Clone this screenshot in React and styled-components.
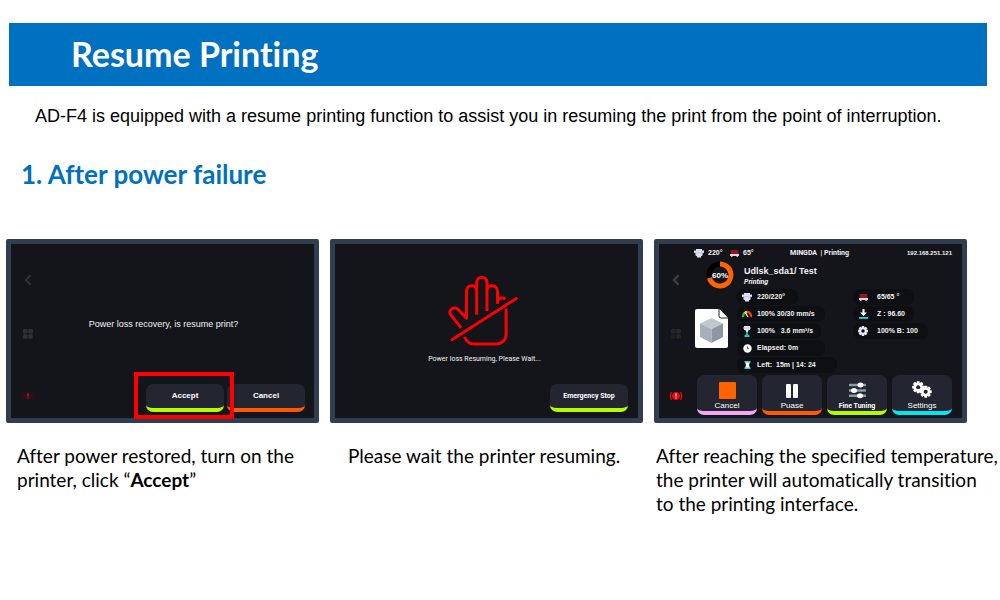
import React from "react";
import styled, { createGlobalStyle } from "styled-components";

const GlobalStyle = createGlobalStyle`
  * { box-sizing: border-box; }
  body { margin: 0; background: #fff; color: #000; font-family: "Liberation Sans", Arial, sans-serif; font-variant-ligatures: none; }
  h1, h2, h3, p, ul, figure { margin: 0; padding: 0; }
  button { font-family: inherit; padding: 0; cursor: pointer; }
  svg { display: block; flex: none; }
`;

const Page = styled.main`
  padding: 23px 0 24px;
`;

const Banner = styled.header`
  display: flex;
  align-items: center;
  height: 63px;
  margin: 0 13px 0 9px;
  padding: 0 62px 2px;
  background: #0070c0;
`;

const Title = styled.h1`
  font-family: Lato, sans-serif;
  font-size: 34px;
  font-weight: 700;
  line-height: 40px;
  color: #fff;
`;

const Intro = styled.p`
  padding: 20px 36px 0 35px;
  font-size: 18px;
  line-height: 20px;
`;

const SectionTitle = styled.h2`
  padding: 32px 21px 0;
  font-family: Lato, sans-serif;
  font-size: 26px;
  font-weight: 700;
  line-height: 32px;
  color: #0070c0;
`;

const Steps = styled.div`
  display: grid;
  grid-template-columns: repeat(3, minmax(0, 1fr));
  gap: 11px;
  padding: 49px 33px 0 6px;
`;

const Step = styled.figure`
  display: flex;
  flex-direction: column;
  gap: 21px;
`;

const Caption = styled.figcaption`
  padding-left: ${(p) => p.$indent}px;
  font-family: Lato, sans-serif;
  font-size: 19px;
  line-height: 24px;
  white-space: nowrap;
`;

const Screen = styled.div`
  display: flex;
  height: 184px;
  border: 5px solid #323e4f;
  border-radius: 2px;
  background: #14151a;
  color: #f2f2f4;
`;

const Side = styled.nav`
  display: flex;
  flex-direction: column;
  align-items: center;
  gap: 40px;
  width: 35px;
  padding: 29px 2px 15px 0;
`;

const SideButton = styled.button`
  display: grid;
  place-items: center;
  width: 16px;
  height: 14px;
  border: 0;
  background: none;
  color: ${(p) => p.$color};

  &:last-child {
    margin-top: auto;
  }
`;

const DialogBody = styled.div`
  flex: 1;
  display: flex;
  flex-direction: column;
  justify-content: flex-end;
  padding: 0 9px 6px 0;
`;

const Message = styled.p`
  margin: auto 24px auto 0;
  padding-top: 20px;
  text-align: center;
  font-size: 9px;
  line-height: 12px;
`;

const WaitBody = styled(DialogBody)`
  align-items: stretch;
  padding: 31px 10px 6px 0;
`;

const WaitNotice = styled.div`
  flex: 1;
  display: flex;
  flex-direction: column;
  align-items: center;
  gap: 7px;
  padding-left: 6px;
`;

const HandFrame = styled.div`
  padding-right: 4px;
`;

const WaitText = styled.p`
  font-family: Roboto, sans-serif;
  font-size: 7px;
  line-height: 10px;
`;

const Actions = styled.div`
  display: flex;
  align-self: flex-end;
  gap: 3px;
`;

const Highlight = styled.div`
  position: relative;
  &::after {
    content: "";
    position: absolute;
    inset: -12px -10px -7px -12px;
    border: 4px solid #f00;
    pointer-events: none;
    z-index: 1;
  }
`;

const PanelButton = styled.button`
  display: block;
  width: 78px;
  height: 28px;
  border: 0;
  border-bottom: 4px solid ${(p) => p.$accent};
  border-radius: 7px;
  background: #232530;
  background-clip: padding-box;
  color: #fff;
  font: 700 ${(p) => p.$size || 8}px/10px ${(p) => p.$family || '"Liberation Sans"'}, sans-serif;
`;

const Dashboard = styled.div`
  flex: 1;
  display: flex;
  flex-direction: column;
  padding: 3px 10px 3px 0;
  min-width: 0;
`;

const StatusBar = styled.div`
  display: flex;
  align-items: center;
  gap: 4px;
  height: 12px;
  font-size: 7px;
  font-weight: 700;
  line-height: 10px;
  white-space: nowrap;
`;

const Temp = styled.span`
  display: flex;
  align-items: center;
  gap: 4px;
  width: 32px;
`;

const Brand = styled.span`
  flex: 1;
  padding-left: 24px;
  font-size: 7px;
  font-family: Roboto, sans-serif;
  white-space: pre;
`;

const Address = styled.span`
  font-size: 6px;
`;

const Job = styled.div`
  display: flex;
  align-items: center;
  gap: 10px;
  height: 28px;
  margin: 2px 0 0 12px;
`;

const JobName = styled.h3`
  padding-top: 2px;
  font-size: 9px;
  font-weight: 700;
  line-height: 11px;
`;

const JobState = styled.p`
  font-size: 7px;
  font-style: italic;
  font-weight: 700;
  line-height: 10px;
  font-family: Roboto, sans-serif;
`;

const Details = styled.div`
  display: flex;
  align-items: flex-start;
  height: 86px;
`;

const Preview = styled.div`
  width: 43px;
  padding: 20px 0 0 1px;
`;

const StatList = styled.ul`
  width: ${(p) => p.$width}px;
  display: flex;
  flex-direction: column;
  align-items: flex-start;
  gap: 1px;
  list-style: none;
`;

const Stat = styled.li`
  display: flex;
  align-items: center;
  gap: ${(p) => p.$gap}px;
  height: 16px;
  padding: 0 5px;
  border-radius: 7px;
  background: #0e0f12;
  font-size: 7px;
  font-weight: 700;
  line-height: 10px;
  white-space: pre;
`;

const Tiles = styled.div`
  display: grid;
  grid-template-columns: repeat(4, 1fr);
  gap: 5px;
  padding-left: 3px;
`;

const Tile = styled.button`
  display: flex;
  flex-direction: column;
  align-items: center;
  justify-content: flex-end;
  gap: 2px;
  height: 40px;
  border: 0;
  border-bottom: 4px solid ${(p) => p.$accent};
  border-radius: 7px;
  background: #232530;
  background-clip: padding-box;
  color: #fff;
  font: ${(p) => (p.$bold ? "700 7px/10px Roboto" : "400 8px/10px 'Liberation Sans'")}, sans-serif;
`;

const Chevron = () => (
  <svg width="8" height="12" viewBox="0 0 8 12" fill="none" stroke="currentColor" strokeWidth="2.4">
    <path d="M6.500 1.200 2 6l4.500 4.800" />
  </svg>
);

const GridIcon = ({ colors }) => (
  <svg width="10" height="10" viewBox="0 0 10 10">
    {colors.map((c, i) => (
      <rect key={i} x={(i % 2) * 5.3} y={Math.floor(i / 2) * 5.3} width="4.500" height="4.500" rx="1.300" fill={c} />
    ))}
  </svg>
);

const AlertIcon = ({ mark }) => (
  <svg width="14" height="10" viewBox="0 0 14 10" fill="none" stroke="currentColor">
    <circle cx="7" cy="5" r="3.600" fill="currentColor" />
    <path d="M2.400 1Q.3 5 2.400 9M11.600 1q2.100 4 0 8" strokeWidth="1.300" />
    <path d="M7 2.500v3M7 6.600v1" stroke={mark} strokeWidth="1.200" />
  </svg>
);

const HandIcon = () => (
  <svg width="70" height="72" viewBox="54 31 212 218" fill="none" stroke="#f00" strokeWidth="9" strokeLinejoin="round">
    <path d="M94 191 62 151c-8-14 8-25 21-17l27 28V78c0-18 30-20 31-1" />
    <path d="M141 151V54c0-22 31-22 31 0v86" />
    <path d="M172 76c2-18 32-16 32 4v38" />
    <path d="M206 107c4-8 16-8 22-3" />
    <path d="M230 133v78c0 16-14 29-31 29h-66c-13 0-23-9-29-22" />
    <path d="M66 227 261 102" strokeLinecap="round" />
  </svg>
);

const NozzleIcon = () => (
  <svg width="10" height="9" viewBox="0 0 10 9">
    <path d="M2 0h6v1.500h2v2.500H8.500v2.500L7 7.200v1.300H3V7.200l-1.500-.7V4H0V1.500h2z" fill="#dedef6" />
    <path d="M0 3.800h10" stroke="#a9a9c9" strokeWidth=".5" />
  </svg>
);

const BedIcon = () => (
  <svg width="9" height="7" viewBox="0 0 9 7">
    <path d="M.7 0h7.600v4H.7z" fill="#8c1a26" />
    <path d="M0 4h9v2H7.800v1H6.500V6h-4v1H1.200V6H0z" fill="#eccfd8" />
  </svg>
);

const SpeedIcon = () => (
  <svg width="10" height="8" viewBox="0 0 10 8" fill="none" strokeWidth="2.400">
    <path d="M1.400 7A4 4 0 0 1 2.300 3.200" stroke="#18c52f" />
    <path d="M2.300 3.200A3.800 3.800 0 0 1 5.500 2" stroke="#f3d318" />
    <path d="M5.500 2A3.800 3.800 0 0 1 8.700 7" stroke="#e93a28" />
    <path d="M3.600 3 6 7" stroke="#fff" strokeWidth="1.300" />
  </svg>
);

const FlowIcon = () => (
  <svg width="8" height="11" viewBox="0 0 8 11">
    <path d="M1 0h6v4H5.500L4.800 6H3.200l-.7-2H1z" fill="#e9e9f7" />
    <path d="M0 1.500h8v1H0z" fill="#bfc6dc" />
    <path d="M3.200 6h1.600v2.200l1.700 1.300V11h-5V9.500l1.700-1.300z" fill="#16cfd6" />
  </svg>
);

const ClockIcon = () => (
  <svg width="9" height="9" viewBox="0 0 9 9">
    <circle cx="4.500" cy="4.500" r="4.200" fill="#fff" />
    <path d="M4.500 2.500v2.200H6" fill="none" stroke="#222" strokeWidth=".8" />
  </svg>
);

const HourglassIcon = () => (
  <svg width="7" height="8" viewBox="0 0 7 8">
    <path d="M1 1h5L5 4l1 3H1l1-3z" fill="#fff" />
    <path d="M.5 0h6v1.400h-6zM.5 6.600h6V8h-6z" fill="#22d3dc" />
  </svg>
);

const ZIcon = () => (
  <svg width="9" height="10" viewBox="0 0 9 10">
    <path d="M3.500 0h2v3.500H8L4.500 7 1 3.500h2.500z" fill="#fff" />
    <path d="M0 8h9v1.800H0z" fill="#12dce8" />
  </svg>
);

const GearShape = ({ x, y, r, color, hole }) => (
  <g transform={`translate(${x} ${y})`}>
    {[0, 45, 90, 135].map((a) => (
      <rect key={a} x={-r / 4} y={-r} width={r / 2} height={r * 2} rx={r / 10} transform={`rotate(${a})`} fill={color} />
    ))}
    <circle r={r * 0.75} fill={color} />
    <circle r={r * 0.34} fill={hole} />
  </g>
);

const GearIcon = () => (
  <svg width="10" height="10" viewBox="0 0 10 10">
    <GearShape x={5} y={5} r={5} color="#e6e6fa" hole="#0e0f12" />
  </svg>
);

const GearsIcon = () => (
  <svg width="20" height="18" viewBox="0 0 20 18">
    <GearShape x={6.2} y={6.2} r={6} color="#fff" hole="#232530" />
    <GearShape x={13.7} y={10.7} r={6} color="#fff" hole="#232530" />
  </svg>
);

const StopIcon = () => (
  <svg width="17" height="17" viewBox="0 0 17 17">
    <rect width="17" height="17" rx="1" fill="#ff6200" />
  </svg>
);

const PauseIcon = () => (
  <svg width="12" height="16" viewBox="0 0 12 16" fill="#fff">
    <rect y="1" width="5" height="14" rx="1" />
    <rect x="7" y="1" width="5" height="14" rx="1" />
  </svg>
);

const SlidersIcon = () => (
  <svg width="17" height="17" viewBox="0 0 17 17">
    <path d="M0 3h17M0 8.500h17M0 13.700h17" stroke="#8b99ab" strokeWidth="2.600" />
    <g fill="#fff">
      <ellipse cx="11.500" cy="3" rx="3" ry="2.500" />
      <ellipse cx="5" cy="8.500" rx="3" ry="2.500" />
      <ellipse cx="11" cy="13.700" rx="3" ry="2.500" />
    </g>
  </svg>
);

const ProgressRing = () => (
  <svg width="28" height="28" viewBox="0 0 28 28" role="img" aria-label="60%">
    <circle cx="14" cy="14" r="11" fill="none" stroke="#000" strokeWidth="5" />
    <path d="M14 3A11 11 0 1 1 3.400 17" fill="none" stroke="#ff6200" strokeWidth="5" />
    <text x="14" y="16.500" textAnchor="middle" fill="#fff" fontFamily="Liberation Sans, sans-serif" fontWeight="700" fontSize="8">60%</text>
  </svg>
);

const FileIcon = () => (
  <svg width="33" height="39" viewBox="0 0 33 39">
    <path d="M2 0h22l9 9v28a2 2 0 0 1-2 2H2a2 2 0 0 1-2-2V2a2 2 0 0 1 2-2z" fill="#fff" />
    <path d="M24 0v7a2 2 0 0 0 2 2h7" fill="#fff" stroke="#26272c" />
    <path d="M16.500 9 28 14.500 16.500 20 5 14.500z" fill="#c3c7cf" />
    <path d="M5 14.500 16.500 20v14L5 28z" fill="#a9afba" />
    <path d="M28 14.500 16.500 20v14L28 28z" fill="#8e95a3" />
  </svg>
);

const Sidebar = ({ active }) => (
  <Side>
    <SideButton $color={active ? "#3c3d42" : "#2f3035"} aria-label="Back"><Chevron /></SideButton>
    <SideButton $color="#2f3035" aria-label="Menu">
      <GridIcon colors={active ? ["#1a2738", "#2c2a18", "#2c191c", "#16301f"] : ["#303136", "#303136", "#303136", "#303136"]} />
    </SideButton>
    <SideButton $color={active ? "#f5050c" : "#3b0c13"} aria-label="Alerts">
      <AlertIcon mark={active ? "#fff" : "#6b5055"} />
    </SideButton>
  </Side>
);

const leftStats = [
  [NozzleIcon, "220/220°", 8],
  [SpeedIcon, "100% 30/30 mm/s", 5],
  [FlowIcon, "100%   3.6 mm³/s", 3],
  [ClockIcon, "Elapsed: 0m", 22],
  [HourglassIcon, "Left:  15m | 14: 24", 16],
];

const rightStats = [
  [BedIcon, "65/65 °", 10],
  [ZIcon, "Z : 96.60", 4],
  [GearIcon, "100% B: 100", 5],
];

const StatIcon = styled.span`
  display: grid;
  place-items: center;
  width: 10px;
`;

const StatText = styled.span`
  padding-right: ${(p) => p.$end}px;
`;

const Stats = ({ items, gap, width }) => (
  <StatList $width={width}>
    {items.map(([Icon, text, end]) => (
      <Stat key={text} $gap={gap}>
        <StatIcon><Icon /></StatIcon>
        <StatText $end={end}>{text}</StatText>
      </Stat>
    ))}
  </StatList>
);

export default function App() {
  return (
    <>
      <GlobalStyle />
      <Page>
        <Banner><Title>Resume Printing</Title></Banner>
        <Intro>AD-F4 is equipped with a resume printing function to assist you in resuming the print from the point of interruption.</Intro>
        <SectionTitle>1. After power failure</SectionTitle>
        <Steps>
          <Step>
            <Screen>
              <Sidebar />
              <DialogBody>
                <Message>Power loss recovery, is resume print?</Message>
                <Actions>
                  <Highlight><PanelButton $accent="#b4fa00">Accept</PanelButton></Highlight>
                  <PanelButton $accent="#ff5a00">Cancel</PanelButton>
                </Actions>
              </DialogBody>
            </Screen>
            <Caption $indent={11}>After power restored, turn on the<br />printer, click “<b>Accept</b>”</Caption>
          </Step>
          <Step>
            <Screen>
              <WaitBody>
                <WaitNotice>
                  <HandFrame><HandIcon /></HandFrame>
                  <WaitText>Power loss Resuming, Please Wait...</WaitText>
                </WaitNotice>
                <Actions>
                  <PanelButton $accent="#b4fa00" $size={7} $family="Roboto">Emergency Stop</PanelButton>
                </Actions>
              </WaitBody>
            </Screen>
            <Caption $indent={18}>Please wait the printer resuming.</Caption>
          </Step>
          <Step>
            <Screen>
              <Sidebar active />
              <Dashboard>
                <StatusBar>
                  <Temp><NozzleIcon />220°</Temp>
                  <Temp><BedIcon />65°</Temp>
                  <Brand>MINGDA  | Printing</Brand>
                  <Address>192.168.251.121</Address>
                </StatusBar>
                <Job>
                  <ProgressRing />
                  <div>
                    <JobName>Udlsk_sda1/ Test</JobName>
                    <JobState>Printing</JobState>
                  </div>
                </Job>
                <Details>
                  <Preview><FileIcon /></Preview>
                  <Stats items={leftStats} gap={5} width={116} />
                  <Stats items={rightStats} gap={9} width={90} />
                </Details>
                <Tiles>
                  <Tile $accent="#f7a6f5"><StopIcon />Cancel</Tile>
                  <Tile $accent="#ff5a00"><PauseIcon />Puase</Tile>
                  <Tile $accent="#b4fa00" $bold><SlidersIcon />Fine Tuning</Tile>
                  <Tile $accent="#00e8ee"><GearsIcon />Settings</Tile>
                </Tiles>
              </Dashboard>
            </Screen>
            <Caption $indent={2}>After reaching the specified temperature,<br />the printer will automatically transition<br />to the printing interface.</Caption>
          </Step>
        </Steps>
      </Page>
    </>
  );
}
